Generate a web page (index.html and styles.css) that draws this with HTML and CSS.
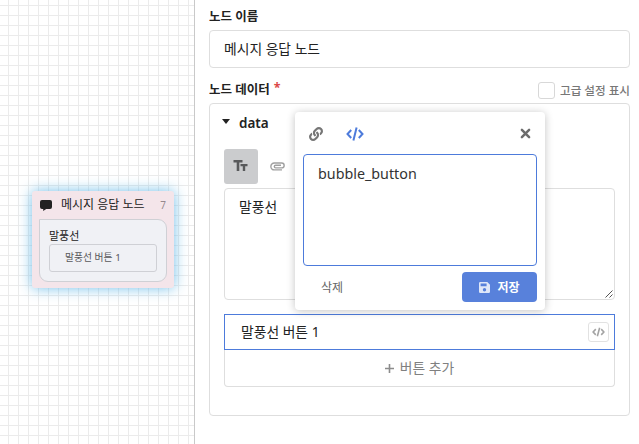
FILE: index.html
```html
<!DOCTYPE html>
<html lang="ko">
<head>
<meta charset="utf-8">
<title>노드 편집</title>
<link rel="stylesheet" href="styles.css">
</head>
<body>
<div class="app">
  <div class="canvas">
    <div class="node">
      <div class="node-head">
        <svg class="chat" viewBox="0 0 12 11"><path d="M2 0h8q2 0 2 2v5q0 2-2 2H6.200L3.200 11V9H2Q0 9 0 7V2Q0 0 2 0z" fill="#222"/></svg>
        <span class="node-title">메시지 응답 노드</span>
        <span class="node-count">7</span>
      </div>
      <div class="bubble">
        <div class="bubble-text">말풍선</div>
        <div class="bubble-button">말풍선 버튼 1</div>
      </div>
    </div>
  </div>
  <div class="panel">
    <div class="label name-label"><span>노드 이름</span></div>
    <div class="input">메시지 응답 노드</div>
    <div class="data-row">
      <div class="label"><span>노드 데이터</span><span class="req">*</span></div>
      <div class="check"><span class="box"></span><span class="check-text">고급 설정 표시</span></div>
    </div>
    <div class="data-box">
      <div class="data-head"><span class="caret"></span><span>data</span></div>
      <div class="tabs">
        <div class="tab active"><svg width="16" height="13" viewBox="0 0 16 13"><path d="M0.500 0h9v2.400H6.300V11H3.700V2.400H0.500zM7.500 4h7v2.200h-2.300V11H9.800V6.200H7.500z" fill="#58595b"/></svg></div>
        <div class="tab"><svg width="15" height="9" viewBox="0 0 15 9"><path d="M12 7.900H4.300A3.400 3.400 0 0 1 4.300 1H11.700A2.400 2.400 0 0 1 11.700 5.900H5.600A1.300 1.300 0 0 1 5.600 3.300H11" fill="none" stroke="#a0a0a0" stroke-width="1.400"/></svg></div>
      </div>
      <div class="message">말풍선
        <svg class="grip" width="8" height="8" viewBox="0 0 8 8"><path d="M0.500 7.500l7-7M4.500 7.500l3-3" stroke="#555" stroke-width="1"/></svg>
      </div>
      <div class="buttons">
        <div class="button-row"><span>말풍선 버튼 1</span>
          <span class="code-chip"><svg width="13" height="10" viewBox="0 0 18 14"><path d="M5.200 3L1.500 7l3.700 4M12.800 3l3.700 4-3.700 4M10.600 1L7.400 13" fill="none" stroke="#a3a3a3" stroke-width="2.200"/></svg></span>
        </div>
        <div class="add-row"><svg width="9" height="9" viewBox="0 0 9 9"><path d="M4.500 0v9M0 4.500h9" stroke="#8c8c8c" stroke-width="1.600"/></svg><span>버튼 추가</span></div>
      </div>
      <div class="popup">
        <div class="popup-head">
          <svg width="14" height="14" viewBox="0 0 512 512"><path fill="#767676" d="M326.612 185.391c59.747 59.809 58.927 155.698.36 214.590-.110.120-.240.250-.360.370l-67.200 67.200c-59.270 59.270-155.699 59.262-214.960 0-59.270-59.260-59.270-155.700 0-214.960l37.106-37.106c9.840-9.840 26.786-3.300 27.294 10.606.648 17.722 3.826 35.527 9.690 52.721 1.986 5.822.567 12.262-3.783 16.612l-13.087 13.087c-28.026 28.026-28.905 73.660-1.155 101.960 28.024 28.579 74.086 28.749 102.325.510l67.200-67.190c28.191-28.191 28.073-73.757 0-101.830-3.701-3.694-7.429-6.564-10.341-8.569a16.037 16.037 0 0 1-6.947-12.606c-.396-10.567 3.348-21.456 11.698-29.806l21.054-21.055c5.521-5.521 14.182-6.199 20.584-1.731a152.482 152.482 0 0 1 20.522 17.197zM467.547 44.449c-59.261-59.262-155.690-59.270-214.960 0l-67.200 67.200c-.120.120-.250.250-.360.370-58.566 58.892-59.387 154.781.360 214.590a152.454 152.454 0 0 0 20.521 17.196c6.402 4.468 15.064 3.789 20.584-1.731l21.054-21.055c8.350-8.350 12.094-19.239 11.698-29.806a16.037 16.037 0 0 0-6.947-12.606c-2.912-2.005-6.640-4.875-10.341-8.569-28.073-28.073-28.191-73.639 0-101.830l67.200-67.190c28.239-28.239 74.300-28.069 102.325.510 27.750 28.300 26.872 73.934-1.155 101.960l-13.087 13.087c-4.350 4.350-5.769 10.790-3.783 16.612 5.864 17.194 9.042 34.999 9.690 52.721.509 13.906 17.454 20.446 27.294 10.606l37.106-37.106c59.271-59.259 59.271-155.699.001-214.959z"/></svg>
          <svg class="code" width="18" height="14" viewBox="0 0 18 14"><path d="M5.200 3L1.500 7l3.700 4M12.800 3l3.700 4-3.700 4M10.600 0.500L7.400 13.500" fill="none" stroke="#4d7bdb" stroke-width="2"/></svg>
          <svg class="close" width="11" height="11" viewBox="0 0 11 11"><path d="M1.900 1.900l7.200 7.200M9.100 1.900L1.900 9.100" stroke="#6c6c6c" stroke-width="2.500" stroke-linecap="round"/></svg>
        </div>
        <div class="popup-text">bubble_button</div>
        <div class="popup-foot">
          <span class="delete">삭제</span>
          <span class="save"><svg width="11" height="11" viewBox="0 0 11 11"><path fill-rule="evenodd" d="M1.200 0H8.300L11 2.700V9.800Q11 11 9.800 11H1.200Q0 11 0 9.800V1.200Q0 0 1.200 0zM1.600 1.600V4.200H7.600V1.600zM5.500 6A1.700 1.700 0 1 0 5.500 9.400A1.700 1.700 0 1 0 5.500 6z" fill="#dfe7f8"/></svg>저장</span>
        </div>
      </div>
    </div>
  </div>
</div>
</body>
</html>
```
FILE: styles.css
```css
* { box-sizing: border-box; }
body {
  margin: 0;
  background: #fff;
  color: #222;
  font-family: "Noto Sans", "Noto Sans CJK KR", sans-serif;
  font-size: 13.8px;
}
svg { display: block; flex: none; }
.app { display: flex; width: 639px; height: 444px; overflow: hidden; }
.canvas {
  width: 195px;
  flex: none;
  border-right: 1px solid #c9c9c9;
  background-image:
    linear-gradient(to right, #ebebeb 1px, transparent 1px),
    linear-gradient(to bottom, #ebebeb 1px, transparent 1px);
  background-size: 10px 10px;
  background-position: 8px 5px;
  padding: 191px 0 0 32px;
}
.node {
  width: 142px;
  height: 97px;
  background: #f4e5ea;
  border-radius: 3px;
  box-shadow: 0 0 14px rgba(100, 185, 232, 0.9);
  padding: 0 7px;
}
.node-head { display: flex; align-items: center; height: 28px; padding: 0 1px 0 1px; line-height: 28px; }
.chat { width: 12px; height: 11px; }
.node-title { margin-left: 9px; font-size: 12px; white-space: nowrap; }
.node-count { margin-left: auto; font-size: 10px; color: #96898d; }
.bubble {
  height: 63px;
  background: #f0f1f5;
  border: 1px solid #cfd0d5;
  border-radius: 0 9px 9px 9px;
  padding: 7px 9px;
}
.bubble-text { font-size: 11px; line-height: 17px; }
.bubble-button {
  height: 28px;
  border: 1px solid #cfd0d5;
  border-radius: 3px;
  padding-left: 15px;
  font-size: 9.8px;
  line-height: 26px;
  color: #58585b;
}
.panel { width: 435px; padding: 0 0 0 14px; flex: none; }
.label { font-size: 12.5px; font-weight: 700; line-height: 18px; display: flex; }
.name-label { padding-top: 8px; height: 30px; }
.input {
  height: 38px;
  border: 1px solid #dedede;
  border-radius: 4px;
  padding-left: 14px;
  line-height: 35px;
}
.data-row { display: flex; justify-content: space-between; height: 35px; padding-top: 13px; }
.req { color: #db4848; margin: -2px 0 0 4px; }
.check { display: flex; gap: 5px; }
.box { width: 17px; height: 17px; margin-top: 1px; border: 1px solid #d8d8d8; border-radius: 3px; }
.check-text { color: #777; font-size: 11.6px; font-weight: 500; line-height: 19px; white-space: nowrap; }
.data-box {
  position: relative;
  height: 313px;
  border: 1px solid #dedede;
  border-radius: 4px;
  padding: 0 14px;
}
.data-head { display: flex; align-items: center; gap: 9px; height: 45px; padding-bottom: 8px; font-size: 13.5px; font-weight: 600; }
.caret { border: 4.5px solid transparent; border-top: 5px solid #222; border-bottom: 0; margin: 0 0 2px -2px; }
.tabs { display: flex; height: 39px; gap: 2px; }
.tab { width: 34px; height: 35px; margin-top: 0; border-radius: 3px; display: flex; align-items: center; justify-content: center; }
.active { background: #cbccce; }
.message {
  position: relative;
  height: 112px;
  border: 1px solid #dedede;
  border-radius: 4px;
  padding: 8px 14px;
  line-height: 20px;
}
.grip { position: absolute; right: 1px; bottom: 1px; }
.buttons { margin-top: 14px; }
.button-row {
  height: 36px;
  border: 1px solid #4d7bdb;
  display: flex;
  align-items: center;
  justify-content: space-between;
  padding: 0 5px 2px 16px;
}
.code-chip {
  width: 21px;
  height: 20px;
  margin-top: 2px;
  border: 1px solid #e2e2e2;
  border-radius: 3px;
  display: flex;
  align-items: center;
  justify-content: center;
}
.add-row {
  height: 37px;
  border: 1px solid #dedede;
  border-top: 0;
  border-radius: 0 0 4px 4px;
  display: flex;
  align-items: center;
  justify-content: center;
  gap: 6px;
  color: #808080;
}
.add-row span { padding-bottom: 3px; }
.popup {
  position: absolute;
  left: 85px;
  top: 8px;
  width: 250px;
  height: 198px;
  background: #fff;
  border-radius: 4px;
  box-shadow: 0 1px 9px rgba(0, 0, 0, 0.24);
  padding: 0 8px;
}
.popup-head { display: flex; align-items: center; height: 42px; padding: 1px 6px 0; }
.code { margin-left: 23px; }
.close { margin-left: auto; }
.popup-text {
  height: 112px;
  border: 1px solid #4d7bdb;
  border-radius: 4px;
  padding: 9px 14px;
  font-size: 14.3px;
  line-height: 20px;
  color: #333;
}
.popup-foot { display: flex; justify-content: space-between; align-items: center; margin-top: 6px; }
.delete { padding-left: 18px; font-size: 12px; color: #666; }
.save {
  width: 75px;
  height: 30px;
  border-radius: 4px;
  background: #5881db;
  color: #fff;
  font-size: 12px;
  font-weight: 700;
  display: flex;
  align-items: center;
  justify-content: center;
  gap: 7px;
}
```
